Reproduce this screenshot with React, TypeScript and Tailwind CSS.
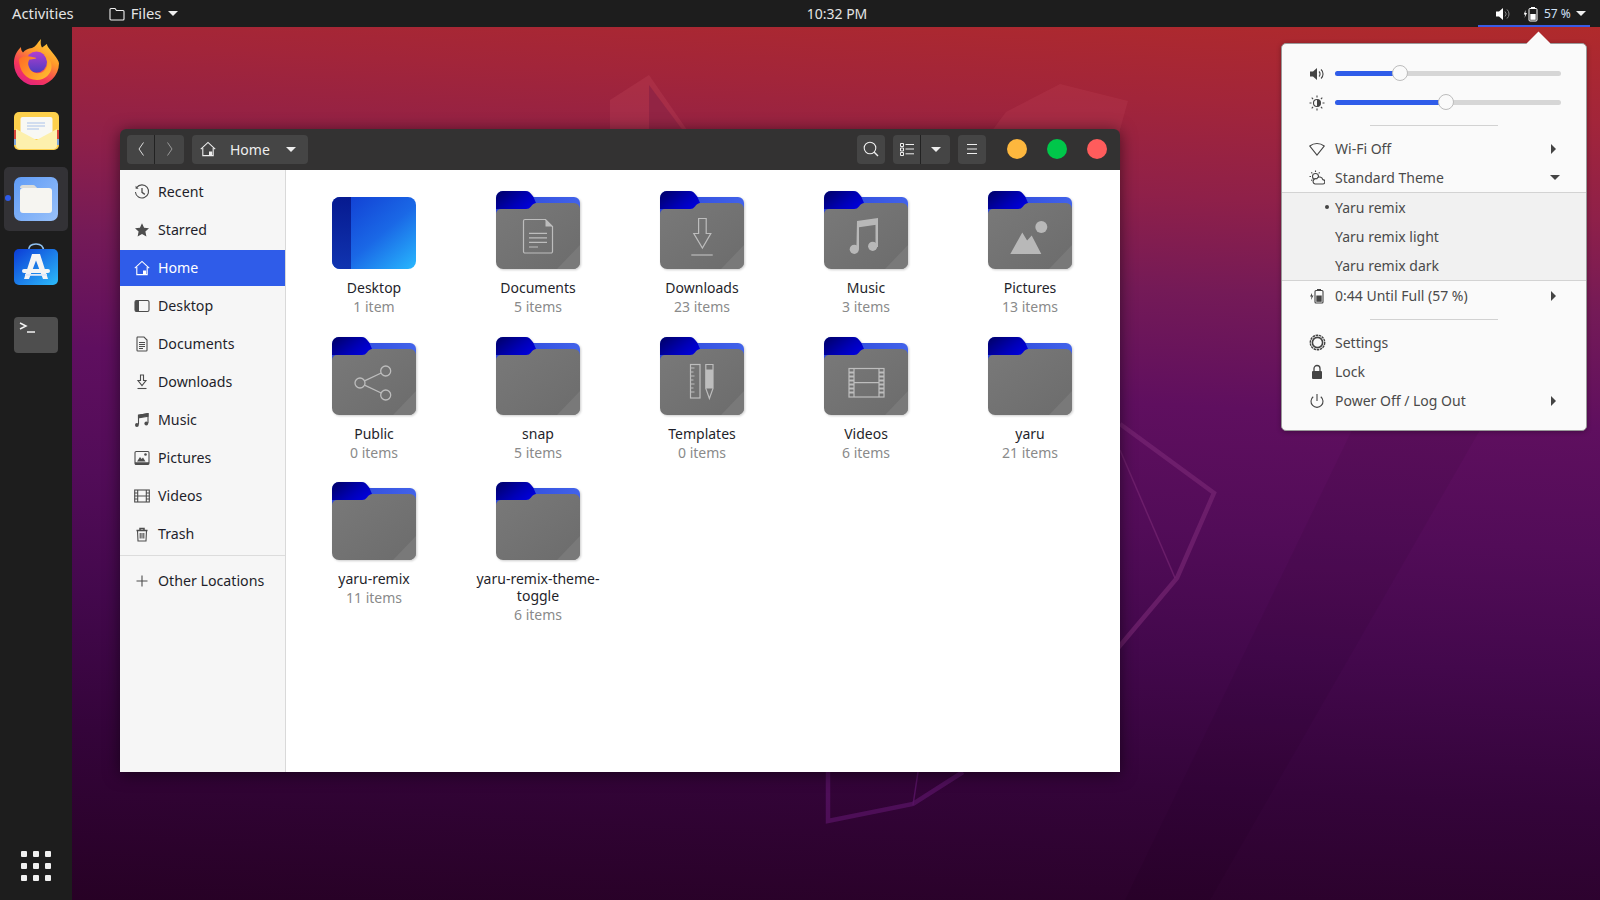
import type { ReactNode } from "react";

function Icon16({ children, className = "" }: { children: ReactNode; className?: string }) {
  return (
    <svg viewBox="0 0 16 16" className={`h-4 w-4 shrink-0 ${className}`} fill="none" stroke="currentColor" strokeWidth="1.1">
      {children}
    </svg>
  );
}

const sidebarIcons: Record<string, ReactNode> = {
  recent: <><path d="M2.6 3.6A6.6 6.6 0 1 1 1.4 8" /><path d="M1.6 1.8v3h3" fill="currentColor" stroke="none" /><path d="M8 4v4.4l2.8 2" strokeWidth="1.3" /></>,
  starred: <path d="M8 1.2l2.1 4.5 4.9.6-3.6 3.3 1 4.9L8 12.1l-4.400 2.400 1-4.900L1 6.300l4.900-.6z" fill="currentColor" stroke="none" />,
  home: <><path d="M.8 8.200 8 1.400l7.200 6.800" /><path d="M2.800 7v7.600h10.400V7" /><path d="M9 15V10.500h3.200V15z" fill="currentColor" stroke="none" /></>,
  desktop: <><rect x="1" y="2.500" width="14" height="11" rx="1.500" /><path d="M1 4a1.500 1.500 0 0 1 1.500-1.500H5v11H2.500A1.500 1.500 0 0 1 1 12z" fill="currentColor" stroke="none" /></>,
  documents: <><path d="M3 1h7l3 3v10.200a.8.8 0 0 1-.8.8H3.800a.8.8 0 0 1-.8-.8V1.800A.8.800 0 0 1 3.800 1z" /><path d="M5 6.500h6M5 8.500h6M5 10.500h6M5 12.500h4" /></>,
  downloads: <><path d="M6.500 1h3v5.500h2.500L8 11.500 4 6.500h2.500z" /><path d="M3.500 14.500h9" /></>,
  music: <><path d="M4.500 12.500V3.200L14 1.600v9.400" /><path d="M4.500 3.200 14 1.600v2.600L4.500 5.800z" fill="currentColor" /><circle cx="2.900" cy="13" r="1.900" fill="currentColor" stroke="none" /><circle cx="12.300" cy="11.500" r="1.900" fill="currentColor" stroke="none" /></>,
  pictures: <><rect x="1" y="1.500" width="14" height="13" rx="1.200" /><path d="M1 12.200h14v1.300a1 1 0 0 1-1 1H2a1 1 0 0 1-1-1z" fill="currentColor" stroke="none" /><path d="M3 11.500l3-4.500 1.600 2L9 7.500l2.500 4z" fill="currentColor" stroke="none" /><circle cx="11.500" cy="4.500" r="1.300" fill="currentColor" stroke="none" /></>,
  videos: <><rect x=".7" y="2" width="14.600" height="12" /><path d="M3.700 2v12M12.300 2v12M3.700 8h8.600M.7 5h3M.7 8h3M.7 11h3M12.300 5h3M12.300 8h3M12.300 11h3" /></>,
  trash: <><path d="M2.500 4.500h11M6 4.300V2.500h4v1.800" strokeWidth="1.500" /><path d="M3.500 4.800 4 15h8l.5-10.200" /><path d="M6.200 7v5.500M8 7v5.500M9.800 7v5.500" /></>,
  plus: <path d="M8 2.500v11M2.500 8h11" />,
};

const places = [
  { key: "recent", label: "Recent" },
  { key: "starred", label: "Starred" },
  { key: "home", label: "Home", active: true },
  { key: "desktop", label: "Desktop" },
  { key: "documents", label: "Documents" },
  { key: "downloads", label: "Downloads" },
  { key: "music", label: "Music" },
  { key: "pictures", label: "Pictures" },
  { key: "videos", label: "Videos" },
  { key: "trash", label: "Trash" },
];

const glyphs: Record<string, ReactNode> = {
  documents: (
    <g stroke="#bdbdbd" strokeWidth="1.200" fill="none">
      <path d="M29 28.500h20.500l7 7v25a1.500 1.500 0 0 1-1.500 1.500H29a1.500 1.500 0 0 1-1.500-1.500V30a1.500 1.500 0 0 1 1.500-1.500z" />
      <path d="M49.500 28.500v7h7z" fill="#bdbdbd" stroke="none" />
      <path d="M33 42.300h18M33 46.800h18M33 51.300h18M33 56h9" />
    </g>
  ),
  downloads: (
    <g stroke="#bdbdbd" strokeWidth="1.200" fill="none">
      <path d="M38.600 27.500h7.600v15h4.600L42.400 57 33.800 42.500h4.800z" />
      <path d="M31.300 64h21.400" />
    </g>
  ),
  music: (
    <g fill="#b8b8b8">
      <path d="M33 30l21-3v6.500l-19 2.800V58h-2.600z" />
      <path d="M51.500 30h2.500v26h-2.500z" />
      <circle cx="30.300" cy="58.300" r="4.600" />
      <circle cx="48.700" cy="55.300" r="4.600" />
    </g>
  ),
  pictures: (
    <g fill="#b8b8b8">
      <circle cx="53.300" cy="36" r="6" />
      <path d="M22.300 63l12-21.500 4.800 8 4.600-5 9.600 18.500z" />
    </g>
  ),
  public: (
    <g stroke="#bdbdbd" strokeWidth="1.300" fill="none">
      <circle cx="28" cy="46" r="5" />
      <circle cx="53.700" cy="34" r="5" />
      <circle cx="53.700" cy="58" r="5" />
      <path d="M32.500 43.800 49.200 36M32.500 48.200 49.200 56" />
    </g>
  ),
  templates: (
    <g stroke="#bdbdbd" strokeWidth="1.200" fill="none">
      <rect x="30.500" y="27.500" width="9.500" height="33.500" />
      <path d="M30.500 31h4M30.500 35h3M30.500 39h4M30.500 43h3M30.500 47h4M30.500 51h3M30.500 55h4" />
      <path d="M45.800 27.500h7.200v24l-3.600 10-3.600-10z" />
      <path d="M45.800 32.500h7.200v19h-7.200z" fill="#bdbdbd" stroke="none" />
    </g>
  ),
  videos: (
    <g stroke="#bdbdbd" strokeWidth="1.200" fill="none">
      <rect x="25" y="31.500" width="35" height="28.500" />
      <path d="M30 31.500V60M55 31.500V60M30 45.700h25" />
      <path d="M25 35.500h5M25 39.500h5M25 43.500h5M25 47.500h5M25 51.500h5M25 55.500h5M55 35.500h5M55 39.500h5M55 43.500h5M55 47.500h5M55 51.500h5M55 55.500h5" strokeWidth="1.800" />
    </g>
  ),
};

function Folder({ glyph, id }: { glyph?: string; id: string }) {
  const back = `back-${id}`;
  const tab = `tab-${id}`;
  const front = `front-${id}`;
  return (
    <svg viewBox="0 0 84 78" className="h-[78px] w-[84px] drop-shadow-[1px_1px_1px_rgba(0,0,0,0.2)]">
      <defs>
        <linearGradient id={back} x1="0" x2="1" y1="0" y2="0">
          <stop offset="0" stopColor="#2b45d8" />
          <stop offset="1" stopColor="#4263ea" />
        </linearGradient>
        <linearGradient id={tab} x1="0" x2="1" y1="0.2" y2="0.8">
          <stop offset="0" stopColor="#00006e" />
          <stop offset="0.6" stopColor="#0000b8" />
          <stop offset="1" stopColor="#0000e0" />
        </linearGradient>
        <linearGradient id={front} x1="0" x2="1" y1="0" y2="1">
          <stop offset="0" stopColor="#797979" />
          <stop offset="1" stopColor="#6c6c6c" />
        </linearGradient>
      </defs>
      <path d="M0 7a7 7 0 0 1 7-7h22c3 0 4.500 1 6 3l2.500 3H78a6 6 0 0 1 6 6v20H0z" fill={`url(#${back})`} />
      <path d="M0 7a7 7 0 0 1 7-7h22c3 0 4.500 1 6 3l2.500 3L40 12 34 18H0z" fill={`url(#${tab})`} />
      <path d="M0 23a5 5 0 0 1 5-5h25c2.500 0 3.500-.8 5-2.500 1.500-2 3-3.500 6-3.500h37a6 6 0 0 1 6 6v53a7 7 0 0 1-7 7H7a7 7 0 0 1-7-7z" fill={`url(#${front})`} />
      <path d="M84 54v17a7 7 0 0 1-7 7H61z" fill="#797979" />
      {glyph ? glyphs[glyph] : null}
    </svg>
  );
}

function DesktopTile() {
  return (
    <svg viewBox="0 0 84 72" className="mt-[6px] h-[72px] w-[84px]">
      <defs>
        <linearGradient id="desk-a" x1="0" x2="1" y1="0" y2="1">
          <stop offset="0" stopColor="#1038d0" />
          <stop offset="0.55" stopColor="#1a68e6" />
          <stop offset="1" stopColor="#28b8fe" />
        </linearGradient>
        <linearGradient id="desk-b" x1="0" x2="0" y1="0" y2="1">
          <stop offset="0" stopColor="#061a90" />
          <stop offset="1" stopColor="#1034b0" />
        </linearGradient>
      </defs>
      <rect width="84" height="72" rx="8" fill="url(#desk-a)" />
      <path d="M8 0h11v72H8a8 8 0 0 1-8-8V8a8 8 0 0 1 8-8z" fill="url(#desk-b)" />
    </svg>
  );
}

const items = [
  { name: "Desktop", sub: "1 item", desk: true },
  { name: "Documents", sub: "5 items", glyph: "documents" },
  { name: "Downloads", sub: "23 items", glyph: "downloads" },
  { name: "Music", sub: "3 items", glyph: "music" },
  { name: "Pictures", sub: "13 items", glyph: "pictures" },
  { name: "Public", sub: "0 items", glyph: "public" },
  { name: "snap", sub: "5 items" },
  { name: "Templates", sub: "0 items", glyph: "templates" },
  { name: "Videos", sub: "6 items", glyph: "videos" },
  { name: "yaru", sub: "21 items" },
  { name: "yaru-remix", sub: "11 items" },
  { name: "yaru-remix-theme-toggle", sub: "6 items" },
];

function Firefox() {
  return (
    <svg viewBox="0 0 45 46" className="h-[46px] w-[45px]">
      <defs>
        <linearGradient id="ff-a" x1="0.8" x2="0.2" y1="0" y2="1">
          <stop offset="0" stopColor="#ffd43a" />
          <stop offset="0.35" stopColor="#ff9a2a" />
          <stop offset="0.7" stopColor="#f5365c" />
          <stop offset="1" stopColor="#de1f86" />
        </linearGradient>
        <linearGradient id="ff-b" x1="0.5" x2="0.5" y1="0" y2="1">
          <stop offset="0" stopColor="#b23fd0" />
          <stop offset="1" stopColor="#4f3cc0" />
        </linearGradient>
        <linearGradient id="ff-c" x1="0" x2="1" y1="0" y2="0.6">
          <stop offset="0" stopColor="#ff6a24" />
          <stop offset="1" stopColor="#ffb52e" />
        </linearGradient>
      </defs>
      <path d="M27 0c-.5 3-.5 6 1 8.500 2-1 4-3 5-3.500 0 3 4 6 7 10.500 3 4 5 7 5 9A22.500 22.500 0 1 1 0 24c0-5 1.500-11 7-16 0 2.500.5 4 2 5.500C11 11 14 9.500 18 9c2-1 3.500-2 5-4 1-1.500 2.500-3.500 4-5z" fill="url(#ff-a)" />
      <circle cx="22.500" cy="23" r="10.500" fill="url(#ff-b)" />
      <path d="M5 20c3-2.500 7-3 10.500-2.500 2.500.3 4.500 1 7 1.500-2 1.200-4.500 1.600-7 1.400-1.200 1.500-1.800 4-.9 6.600 1.400 4.300 4.800 7.200 8.900 7.200 6 0 10.300-5 9.800-10.500-.3-3.200-1.500-6-3.800-8.200 5.500 2.500 8.500 7.500 8 13C37 35 31 41 23 41 12 41 5 32 5 20z" fill="url(#ff-c)" />
    </svg>
  );
}

function Mail() {
  return (
    <svg viewBox="0 0 45 38" className="h-[38px] w-[45px]">
      <rect width="45" height="38" rx="5" fill="#fdd04c" />
      <path d="M0 18h2v9H0zM43 18h2v9h-2z" fill="#d8453a" />
      <path d="M0 27h2v6H0zM43 27h2v6h-2z" fill="#7ea6dc" />
      <rect x="6.500" y="5" width="32" height="22" rx="2" fill="#f8f8f4" />
      <path d="M13 11h18M13 14h18M13 17h12" stroke="#a9c2ea" strokeWidth="1.200" />
      <path d="M2 17l20.500 11L43 17v16a4 4 0 0 1-4 4H6a4 4 0 0 1-4-4z" fill="#fdf0ad" />
    </svg>
  );
}

function FilesIcon() {
  return (
    <svg viewBox="0 0 44 44" className="h-11 w-11">
      <defs>
        <linearGradient id="fi-a" x1="0" x2="1" y1="0" y2="1">
          <stop offset="0" stopColor="#5f9bf6" />
          <stop offset="1" stopColor="#99c1f9" />
        </linearGradient>
      </defs>
      <rect width="44" height="44" rx="7" fill="url(#fi-a)" />
      <path d="M6 11a3 3 0 0 1 3-3h10c2 0 3 2 4 3z" fill="#dcdcd8" />
      <rect x="6" y="11" width="32" height="25" rx="3" fill="#f6f5f1" />
    </svg>
  );
}

function StoreIcon() {
  return (
    <svg viewBox="0 0 44 42" className="h-[42px] w-11">
      <defs>
        <linearGradient id="st-a" x1="0" x2="1" y1="0" y2="1">
          <stop offset="0" stopColor="#0b3bd6" />
          <stop offset="1" stopColor="#2cbcfb" />
        </linearGradient>
      </defs>
      <path d="M14.500 8C14.500 3 17 1 22 1s7.500 2 7.500 7" fill="none" stroke="#8fc0ef" strokeWidth="1.600" />
      <rect y="6" width="44" height="36" rx="5" fill="url(#st-a)" />
      <path d="M18 11h8l8 25h-5L22 17.500 15 36h-5z" fill="#f4f4f4" />
      <rect x="8" y="26" width="28" height="4" rx="2" fill="#f4f4f4" />
      <rect x="11" y="31" width="22" height="1.800" fill="#dfe8f8" />
    </svg>
  );
}

function TerminalIcon() {
  return (
    <svg viewBox="0 0 44 36" className="h-9 w-11">
      <rect width="44" height="36" rx="4" fill="#4e4e4e" />
      <path d="M6 6l6 3-6 3M13 15h8" fill="none" stroke="#f2f2f2" strokeWidth="1.500" />
    </svg>
  );
}

function Caret({ className = "" }: { className?: string }) {
  return <span className={`h-0 w-0 border-x-[5px] border-t-[5px] border-x-transparent ${className}`} />;
}

function ArrowRight() {
  return <span className="ml-auto mr-[30px] h-0 w-0 border-y-[5px] border-l-[5px] border-y-transparent border-l-[#444]" />;
}

function Slider({ fill }: { fill: "vol" | "bri" }) {
  return (
    <div className="relative h-[5px] w-[226px] rounded-full bg-[#d6d6d6]">
      <div className={`h-full rounded-full bg-[#2f5ce9] ${fill === "vol" ? "w-[65px]" : "w-[111px]"}`} />
      <div className={`absolute top-[-6px] h-4 w-4 rounded-full border border-[#bcbcbc] bg-[#fafafa] ${fill === "vol" ? "left-[57px]" : "left-[103px]"}`} />
    </div>
  );
}

function MenuRow({ icon, label, right }: { icon?: ReactNode; label: string; right?: ReactNode }) {
  return (
    <div className="flex h-[29px] items-center pl-[27px] text-[14px] text-[#4a4a4a]">
      <span className="flex w-4 justify-center text-[#444]">{icon}</span>
      <span className="ml-[10px]">{label}</span>
      {right}
    </div>
  );
}

function Divider() {
  return <div className="mx-auto my-2 h-px w-[128px] bg-[#d2d2d2]" />;
}

function HeaderBtn({ children, className = "" }: { children: ReactNode; className?: string }) {
  return <div className={`flex h-[29px] items-center justify-center rounded-[4px] bg-[#454545] text-[#eee] ${className}`}>{children}</div>;
}

export default function App() {
  return (
    <div className="flex h-screen w-screen flex-col overflow-hidden font-['Noto_Sans',sans-serif]">
      <header className="flex h-[27px] shrink-0 items-center bg-[#1d1d1d] text-[#e4e4e4]">
        <div className="flex w-[767px] items-center text-[14.800px]">
          <span className="ml-3">Activities</span>
          <svg viewBox="0 0 16 16" className="ml-[35px] h-4 w-4" fill="none" stroke="#eee" strokeWidth="1.100">
            <path d="M1 13V3.500A1 1 0 0 1 2 2.500h4l1.500 2H14a1 1 0 0 1 1 1V13a1 1 0 0 1-1 1H2a1 1 0 0 1-1-1z" />
          </svg>
          <span className="ml-[6px]">Files</span>
          <Caret className="ml-[7px] border-t-[#eee]" />
        </div>
        <div className="w-[140px] text-center text-[14px]">10:32 PM</div>
        <div className="ml-auto mr-[10px] flex h-full w-[112px] items-center border-b-2 border-[#3a5ce5] pt-[2px]">
          <svg viewBox="0 0 16 16" className="ml-[17px] h-4 w-4">
            <path d="M1 5.500h3L8 2v12L4 10.500H1z" fill="#fff" />
            <path d="M10 5.500a3.500 3.500 0 0 1 0 5M12 3.500a6 6 0 0 1 0 9" fill="none" stroke="#888" strokeWidth="1" />
          </svg>
          <svg viewBox="0 0 16 16" className="ml-3 h-4 w-4">
            <path d="M2.500 4 .8 8.500h1.500L1.500 12l2.500-5H2.500z" fill="#fff" />
            <rect x="6" y="2.500" width="8" height="12.500" rx="1" fill="none" stroke="#fff" strokeWidth="1" />
            <rect x="8" y="1" width="4" height="1.500" fill="#fff" />
            <rect x="7.300" y="8" width="5.400" height="5.800" fill="#fff" />
          </svg>
          <span className="ml-[5px] text-[12px] text-[#cfe0f5]">57 %</span>
          <Caret className="ml-[5px] border-t-[#eee]" />
        </div>
      </header>

      <div className="flex min-h-0 flex-1">
        <aside className="flex w-[72px] shrink-0 flex-col items-center bg-[#1d1d1d] pt-px">
          <div className="flex h-[68px] w-16 items-center justify-center"><Firefox /></div>
          <div className="mt-px flex h-[68px] w-16 items-center justify-center"><Mail /></div>
          <div className="relative flex h-[68px] w-16 items-center justify-center">
            <div className="flex h-16 w-16 items-center justify-center rounded-[5px] bg-[#333236]"><FilesIcon /></div>
            <span className="absolute left-[1px] top-[30px] h-[6px] w-[6px] rounded-full bg-[#2f5ce9]" />
          </div>
          <div className="flex h-[68px] w-16 items-center justify-center pb-[6px]"><StoreIcon /></div>
          <div className="flex h-[68px] w-16 items-center justify-center"><TerminalIcon /></div>
          <div className="mb-[19px] mt-auto grid grid-cols-3 gap-[6px]">
            {Array.from({ length: 9 }).map((_, i) => (
              <span key={i} className="h-[6px] w-[6px] rounded-[1px] bg-[#f0f0f0]" />
            ))}
          </div>
        </aside>

        <main className="relative flex-1 bg-[linear-gradient(183deg,#b02a2b_0%,#a2253a_10%,#8f2049_20%,#741a57_30%,#5f0f5f_42%,#520c58_55%,#43084c_68%,#34043a_82%,#270125_100%)]">
          <svg viewBox="72 27 1528 873" className="absolute inset-0 h-full w-full">
            <path d="M1352 430 1480 430 1210 900 1125 900z" fill="#000" opacity="0.05" />
            <path d="M610 100 649 75 694 140 610 140z" fill="#c84a60" opacity="0.25" />
            <path d="M649 85 649 140 690 140z" fill="#8d2243" opacity="0.8" />
            <path d="M1060 84 1128 101 1117 140 985 140 1006 112z" fill="#c84a60" opacity="0.2" />
            <path d="M1120 424 1214 493 1177 578 1118 648" fill="none" stroke="#7c2a77" strokeWidth="4.500" opacity="0.6" />
            <path d="M1120 450 1175 578" fill="none" stroke="#7c2a77" strokeWidth="1.500" opacity="0.6" />
            <path d="M828 772 828 821 913 804 963 772" fill="none" stroke="#5a1466" strokeWidth="4.500" opacity="0.7" />
            <path d="M913 805 918 772" fill="none" stroke="#5a1466" strokeWidth="1.500" opacity="0.8" />
          </svg>

          {/* file manager window */}
          <section className="absolute left-[48px] top-[102px] flex h-[643px] w-[1000px] flex-col overflow-hidden rounded-t-[6px] shadow-[0_2px_16px_rgba(0,0,0,0.55)]">
            <div className="flex h-[41px] shrink-0 items-center bg-[#333232] pb-px pl-[7px] pr-[13px]">
              <div className="flex h-[29px] w-[57px] overflow-hidden rounded-[4px] bg-[#454545]">
                <div className="flex w-7 items-center justify-center border-r border-[#222]">
                  <svg viewBox="0 0 16 16" className="h-4 w-4" fill="none" stroke="#ddd" strokeWidth="1"><path d="M10.500 1.500 6 8l4.500 6.500" /></svg>
                </div>
                <div className="flex flex-1 items-center justify-center">
                  <svg viewBox="0 0 16 16" className="h-4 w-4" fill="none" stroke="#999" strokeWidth="1"><path d="M5.500 1.500 10 8l-4.500 6.500" /></svg>
                </div>
              </div>
              <HeaderBtn className="ml-2 w-[116px] justify-start pl-2 text-[14px]">
                <Icon16>{sidebarIcons.home}</Icon16>
                <span className="ml-[14px]">Home</span>
                <Caret className="ml-[16px] border-t-[#eee]" />
              </HeaderBtn>
              <HeaderBtn className="ml-auto w-7">
                <svg viewBox="0 0 16 16" className="h-4 w-4" fill="none" stroke="#eee" strokeWidth="1.100"><circle cx="7" cy="7" r="5.800" /><path d="M11 11l4 4" strokeWidth="1.500" /></svg>
              </HeaderBtn>
              <div className="ml-2 flex h-[29px] w-[57px] overflow-hidden rounded-[4px] bg-[#454545]">
                <div className="flex w-7 items-center justify-center border-r border-[#222]">
                  <svg viewBox="0 0 16 16" className="h-4 w-4" fill="none" stroke="#eee" strokeWidth="1"><path d="M1.500 2.500h3v3h-3zM1.500 7h3v3h-3zM1.500 11.500h3v3h-3zM6.500 3.500H15M6.500 8H15M6.500 12.800H15" /></svg>
                </div>
                <div className="flex flex-1 items-center justify-center"><Caret className="border-t-[#eee]" /></div>
              </div>
              <HeaderBtn className="ml-2 w-7">
                <svg viewBox="0 0 16 16" className="h-4 w-4" fill="none" stroke="#eee" strokeWidth="1"><path d="M3 3.500h10M3 8h10M3 12.500h10" /></svg>
              </HeaderBtn>
              <span className="ml-[21px] h-5 w-5 rounded-full bg-[#fdb73e]" />
              <span className="ml-5 h-5 w-5 rounded-full bg-[#00c74a]" />
              <span className="ml-5 h-5 w-5 rounded-full bg-[#ff5c5c]" />
            </div>

            <div className="flex min-h-0 flex-1 bg-white">
              <nav className="w-[166px] shrink-0 border-r border-[#d9d9d9] bg-[#f6f6f6] pt-1 text-[14.200px] text-[#1f1f2b]">
                {places.map((p) => (
                  <div key={p.key} className={`mb-[2px] flex h-9 items-center gap-2 pl-[14px] ${p.active ? "bg-[#2f5ce9] text-white" : ""}`}>
                    <Icon16 className={p.active ? "text-white" : "text-[#4d4d4d]"}>{sidebarIcons[p.key]}</Icon16>
                    <span>{p.label}</span>
                  </div>
                ))}
                <div className="mb-[7px] mt-[3px] h-px bg-[#dcdcdc]" />
                <div className="flex h-9 items-center gap-2 pl-[14px]">
                  <Icon16 className="text-[#4d4d4d]">{sidebarIcons.plus}</Icon16>
                  <span>Other Locations</span>
                </div>
              </nav>
              <div className="grid flex-1 auto-rows-[145.5px] grid-cols-[repeat(5,164px)] content-start pl-[6px] pt-[21px]">
                {items.map((it, i) => (
                  <div key={it.name} className="flex flex-col items-center text-center">
                    <div className="flex h-[78px] items-start">
                      {it.desk ? <DesktopTile /> : <Folder glyph={it.glyph} id={String(i)} />}
                    </div>
                    <div className="mt-[10px] w-[136px] text-[14px] leading-[17px] text-[#1f1f2b]">{it.name}</div>
                    <div className="mt-px text-[14px] leading-[19px] text-[#8a8a8a]">{it.sub}</div>
                  </div>
                ))}
              </div>
            </div>
          </section>

          {/* system menu */}
          <section className="absolute left-[1209px] top-[16px] h-[388px] w-[306px] rounded-[5px] border border-[#9a9a9a] bg-[#fafafa] pt-[15px] shadow-[0_1px_5px_rgba(0,0,0,0.3)]">
            <div className="absolute left-[248px] top-[-9px] h-[17px] w-[17px] rotate-45 bg-[#fafafa]" />
            <div className="relative flex h-[29px] items-center pl-[27px]">
              <Icon16 className="text-[#444]">
                <path d="M1 5.500h3L8 2v12L4 10.500H1z" fill="currentColor" stroke="none" />
                <path d="M10 5.500a3.500 3.500 0 0 1 0 5M12 3.500a6 6 0 0 1 0 9" />
              </Icon16>
              <span className="ml-[10px]"><Slider fill="vol" /></span>
            </div>
            <div className="relative flex h-[29px] items-center pl-[27px]">
              <Icon16 className="text-[#444]">
                <circle cx="8" cy="8" r="3.500" />
                <path d="M8 4.500a3.500 3.500 0 0 1 0 7z" fill="currentColor" stroke="none" />
                <path d="M8 .5v2M8 13.500v2M.5 8h2M13.500 8h2M2.700 2.700l1.400 1.400M11.900 11.900l1.400 1.400M2.700 13.300l1.400-1.400M11.900 4.100l1.400-1.400" />
              </Icon16>
              <span className="ml-[10px]"><Slider fill="bri" /></span>
            </div>
            <Divider />
            <MenuRow
              label="Wi-Fi Off"
              icon={<Icon16><path d="M.8 5C3 3.300 5.500 2.500 8 2.500s5 .8 7.200 2.500L8 14z" /></Icon16>}
              right={<ArrowRight />}
            />
            <MenuRow
              label="Standard Theme"
              icon={<Icon16><circle cx="6.500" cy="6.500" r="3" /><path d="M6.500 .5v1.500M.5 6.500H2M2.300 2.300l1 1M10.700 2.300l-1 1M2.300 10.700l1-1" /><path d="M6 14h7.500a2.200 2.200 0 0 0 .3-4.400 3.200 3.200 0 0 0-6-.8A2.600 2.600 0 0 0 6 14z" fill="#fafafa" /></Icon16>}
              right={<Caret className="ml-auto mr-[26px] border-t-[#444]" />}
            />
            <div className="border-y border-[#d3d3d3] bg-[#f1f1f1]">
              <div className="relative">
                <span className="absolute left-[43px] top-[12px] h-1 w-1 rounded-full bg-[#444]" />
                <MenuRow label="Yaru remix" />
              </div>
              <MenuRow label="Yaru remix light" />
              <MenuRow label="Yaru remix dark" />
            </div>
            <MenuRow
              label="0:44 Until Full (57 %)"
              icon={<Icon16><path d="M3 5 1 8.500h1.500L2 12l2.500-4.500H3z" fill="currentColor" stroke="none" /><rect x="6" y="2.500" width="8" height="12.500" rx="1" /><rect x="8" y="1" width="4" height="1.500" fill="currentColor" stroke="none" /><rect x="7.300" y="7.500" width="5.400" height="6.300" fill="currentColor" stroke="none" /></Icon16>}
              right={<ArrowRight />}
            />
            <div className="pt-px"><Divider /></div>
            <MenuRow
              label="Settings"
              icon={<Icon16 className="h-[17px] w-[17px]"><circle cx="8" cy="8" r="4.800" strokeWidth="1.500" /><circle cx="8" cy="8" r="6.800" strokeDasharray="2.400 .6" strokeWidth="1.300" /></Icon16>}
            />
            <MenuRow
              label="Lock"
              icon={<Icon16><path d="M5 7V4.500a3 3 0 0 1 6 0V7" strokeWidth="1.300" /><rect x="3" y="7" width="10" height="8" rx="1" fill="currentColor" stroke="none" /></Icon16>}
            />
            <MenuRow
              label="Power Off / Log Out"
              icon={<Icon16><path d="M4.200 3.700a6 6 0 1 0 7.600 0M8 1v7" /></Icon16>}
              right={<ArrowRight />}
            />
          </section>
        </main>
      </div>
    </div>
  );
}
